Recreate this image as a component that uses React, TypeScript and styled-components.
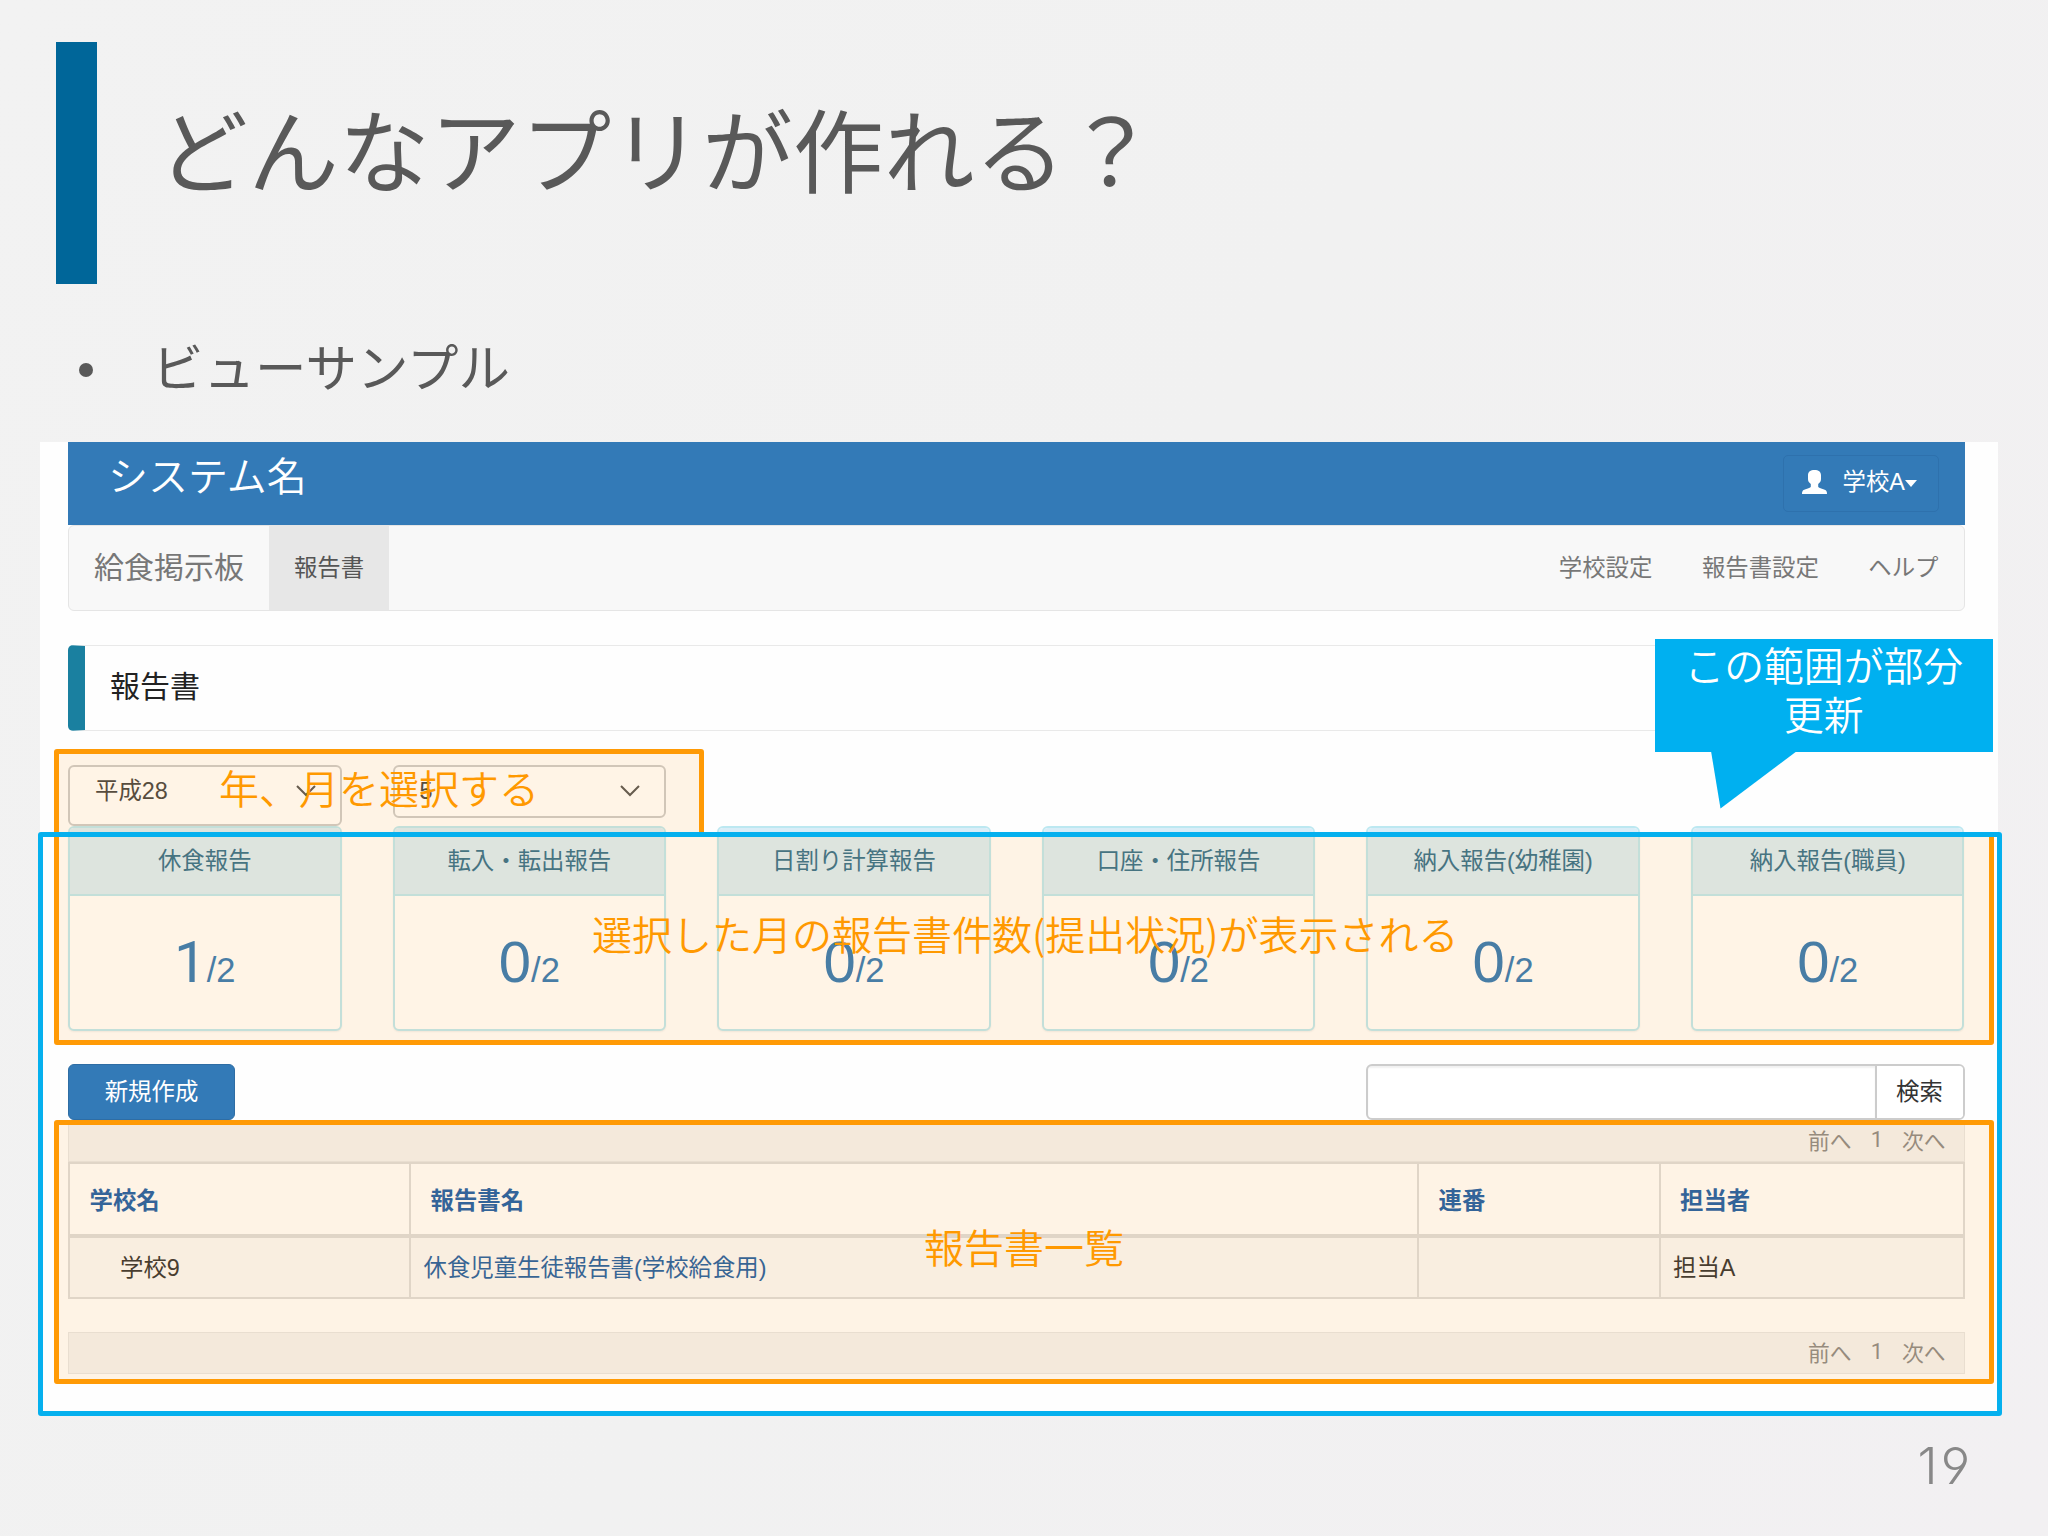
import React from "react";
import styled, { createGlobalStyle } from "styled-components";

const jp = '"Noto Sans CJK JP", "Noto Sans", sans-serif';
const ui = '"Liberation Sans", "Noto Sans CJK JP", sans-serif';

const Global = createGlobalStyle`
  * { box-sizing: border-box; }
  body { margin: 0; background: #f1f1f1; }
`;

const Slide = styled.main`
  position: relative;
  width: 2048px;
  height: 1536px;
  overflow: hidden;
  display: flex;
  flex-direction: column;
  background: linear-gradient(120deg, #f2f2f2 0%, #f1f1f1 50%, #f2f0f2 100%);
  font-family: ${jp};
  font-weight: 350;
  color: #595959;
`;

const SlideHeader = styled.header`
  display: flex;
  height: 242px;
  margin: 42px 0 0 56px;
`;

const Accent = styled.div`
  width: 40.5px;
  background: #006699;
`;

const Title = styled.h1`
  margin: 0 0 0 61px;
  font-size: 90.5px;
  line-height: 110px;
  padding-top: 50px;
  font-weight: 400;
  letter-spacing: 0.3px;
  white-space: nowrap;
`;

const BulletList = styled.ul`
  list-style: none;
  margin: 0;
  padding: 44px 0 0 79px;
  height: 157.5px;
`;

const BulletItem = styled.li`
  display: flex;
  align-items: center;
  gap: 59px;
  height: 74px;
  font-size: 51.5px;
  font-weight: 400;
  line-height: 74px;
`;

const Dot = styled.span`
  width: 14px;
  height: 14px;
  margin-top: 9px;
  border-radius: 50%;
  background: #595959;
`;

const AppPanel = styled.section`
  width: 1958px;
  height: 970px;
  margin-left: 40px;
  padding: 0 33.5px 0 28px;
  display: flex;
  flex-direction: column;
  background: #fefefe;
  font-family: ${ui};
  font-weight: 400;
  font-size: 23.4px;
  color: #333;
`;

const TopBar = styled.div`
  display: flex;
  justify-content: space-between;
  height: 83px;
  flex: none;
  padding: 13px 26px 0 40px;
  background: #337ab7;
  color: #fff;
`;

const SystemName = styled.div`
  font-family: ${jp};
  font-weight: 350;
  font-size: 40px;
  line-height: 40px;
  margin-top: -1px;
`;

const UserButton = styled.button`
  display: flex;
  align-items: center;
  width: 156px;
  height: 57px;
  padding: 0 0 2px 18px;
  border: 1.5px solid #2e71ad;
  border-radius: 5px;
  background: #337ab7;
  color: #fff;
  font: 400 23.4px/30px ${ui};
  white-space: nowrap;
`;

const UserIcon = styled.svg`
  width: 25px;
  height: 24px;
  margin-right: 16px;
  margin-top: -1px;
  fill: #fff;
`;

const Caret = styled.span`
  border: 6px solid transparent;
  border-top: 7px solid #fff;
  border-bottom: 0;
  margin-top: 2px;
`;

const NavBar = styled.nav`
  display: flex;
  align-items: stretch;
  height: 86px;
  flex: none;
  border: 1.5px solid #e5e5e5;
  border-radius: 6px;
  background: #f8f8f8;
  color: #777;
  line-height: 84px;
`;

const Brand = styled.a`
  width: 200px;
  padding-left: 25px;
  font-size: 30px;
`;

const Tab = styled.a`
  width: 120px;
  text-align: center;
  background: #e7e7e7;
  color: #555;
`;

const NavLinks = styled.div`
  display: flex;
  gap: 49.5px;
  margin-left: auto;
  padding-right: 25px;
`;

const Heading = styled.h2`
  margin: 34px 0;
  height: 86px;
  flex: none;
  padding-left: 25px;
  border: 1.5px solid #e9e9e9;
  border-left: 17px solid #1a80a0;
  border-radius: 5px;
  font-size: 30px;
  font-weight: 400;
  line-height: 81px;
  color: #222;
`;

const Filters = styled.div`
  display: flex;
  gap: 51px;
  height: 61px;
  flex: none;
  align-items: flex-start;
`;

const Select = styled.div<{ $h: number }>`
  display: flex;
  align-items: flex-start;
  justify-content: space-between;
  width: 273.5px;
  height: ${(p) => p.$h}px;
  padding: 0 24px 0 25px;
  border: 2px solid #ccc;
  border-radius: 6px;
  background: #fff;
  color: #444;
  line-height: 49px;
`;

const Chevron = styled.svg`
  width: 20px;
  height: 12px;
  margin-top: 18px;
  fill: none;
  stroke: #555;
  stroke-width: 2;
`;

const Cards = styled.div`
  display: grid;
  grid-template-columns: repeat(6, 273.5px);
  justify-content: space-between;
  height: 205px;
  flex: none;
`;

const Card = styled.article`
  display: flex;
  flex-direction: column;
  border: 2px solid #bce8f1;
  border-radius: 6px;
  background: #fff;
  overflow: hidden;
  box-shadow: 0 1px 2px rgba(0, 0, 0, 0.06);
`;

const CardHead = styled.div`
  height: 68px;
  line-height: 67px;
  text-align: center;
  background: #d9edf7;
  border-bottom: 2px solid #bce8f1;
  color: #31708f;
`;

const Count = styled.div`
  text-align: center;
  font-size: 58px;
  line-height: 66px;
  padding-top: 33px;
  color: #337ab7;
`;

const Digit = styled.span<{ $one: boolean }>`
  font-family: ${(p) => (p.$one ? "Roboto, sans-serif" : ui)};
`;

const Total = styled.span`
  font-size: 34.5px;
`;

const Toolbar = styled.div`
  display: flex;
  justify-content: space-between;
  height: 56px;
  flex: none;
  margin-top: 33px;
`;

const CreateButton = styled.button`
  width: 167px;
  padding: 0 6px;
  border: 1.5px solid #2e6da4;
  border-radius: 6px;
  background: #337ab7;
  color: #fff;
  font: 400 23.4px/30px ${ui};
`;

const SearchGroup = styled.div`
  display: flex;
  width: 599px;
  border: 2px solid #ccc;
  border-radius: 6px;
  background: #fff;
  overflow: hidden;
`;

const SearchField = styled.div`
  flex: 1;
  box-shadow: inset 0 2px 2px rgba(0, 0, 0, 0.06);
`;

const SearchButton = styled.button`
  width: 88px;
  border: 0;
  border-left: 2px solid #ccc;
  background: #fff;
  color: #333;
  font: 400 23.4px/30px ${ui};
`;

const Pager = styled.div<{ $top: number }>`
  display: flex;
  justify-content: flex-end;
  gap: 19px;
  height: 42px;
  flex: none;
  margin-top: ${(p) => p.$top}px;
  padding-right: 18px;
  border: 1px solid #e7e7e7;
  background: #f3f3f3;
  color: #8a8a8a;
  font-size: 21.8px;
  line-height: 42px;
`;

const PageNo = styled.span`
  font-family: Roboto, sans-serif;
  line-height: 37px;
`;

const Table = styled.div`
  display: grid;
  grid-template-columns: 341px 1008px 241.5px 1fr;
  flex: none;
  border-left: 2px solid #ddd;
  border-top: 2px solid #ddd;
`;

const Th = styled.div`
  height: 74px;
  padding-left: 19.5px;
  border-right: 2px solid #ddd;
  border-bottom: 4px solid #ddd;
  font-weight: 700;
  line-height: 74px;
  color: #1b5fa9;
`;

const Td = styled.div<{ $pad: number; $link?: boolean }>`
  height: 61px;
  padding-left: ${(p) => p.$pad}px;
  border-right: 2px solid #ddd;
  border-bottom: 2px solid #ddd;
  background: #f9f9f9;
  line-height: 60px;
  color: ${(p) => (p.$link ? "#1f60a4" : "#333")};
`;

const Region = styled.div<{ $x: number; $y: number; $w: number; $h: number; $blue?: boolean }>`
  position: absolute;
  left: ${(p) => p.$x}px;
  top: ${(p) => p.$y}px;
  width: ${(p) => p.$w}px;
  height: ${(p) => p.$h}px;
  border: 5.5px solid ${(p) => (p.$blue ? "#05b0ee" : "#ff9a05")};
  border-radius: 3px;
`;

const Tint = styled.div<{ $x: number; $y: number; $w: number; $h: number }>`
  position: absolute;
  left: ${(p) => p.$x}px;
  top: ${(p) => p.$y}px;
  width: ${(p) => p.$w}px;
  height: ${(p) => p.$h}px;
  background: rgba(255, 153, 20, 0.105);
`;

const Note = styled.div<{ $x: number; $y: number }>`
  position: absolute;
  left: ${(p) => p.$x}px;
  top: ${(p) => p.$y}px;
  font-size: 40px;
  line-height: 50px;
  color: #ff9900;
  white-space: nowrap;
`;

const Callout = styled.div`
  position: absolute;
  left: 1654.5px;
  top: 639px;
  width: 338.5px;
  height: 113px;
  background: #00b0f0;
  color: #fff;
  font-size: 39.8px;
  line-height: 49px;
  text-align: center;
`;

const Tail = styled.svg`
  position: absolute;
  left: 56px;
  top: 112px;
  width: 86px;
  height: 58px;
  fill: #00b0f0;
`;

const PageNumber = styled.footer`
  margin: 22px 75px 0 auto;
  font-family: Inter, sans-serif;
  font-feature-settings: "cv04" 1;
  font-weight: 300;
  font-size: 51px;
  line-height: 64px;
  letter-spacing: 3px;
  color: #888;
`;

const reports: [string, number][] = [
  ["休食報告", 1],
  ["転入・転出報告", 0],
  ["日割り計算報告", 0],
  ["口座・住所報告", 0],
  ["納入報告(幼稚園)", 0],
  ["納入報告(職員)", 0],
];

const Down = () => (
  <Chevron viewBox="0 0 20 12">
    <path d="M1 1 L10 10 L19 1" />
  </Chevron>
);

const Pages = ({ top }: { top: number }) => (
  <Pager $top={top}>
    <span>前へ</span>
    <PageNo>1</PageNo>
    <span>次へ</span>
  </Pager>
);

export default function App() {
  return (
    <Slide>
      <Global />
      <SlideHeader>
        <Accent />
        <Title>どんなアプリが作れる？</Title>
      </SlideHeader>
      <BulletList>
        <BulletItem>
          <Dot />
          ビューサンプル
        </BulletItem>
      </BulletList>

      <AppPanel>
        <TopBar>
          <SystemName>システム名</SystemName>
          <UserButton>
            <UserIcon viewBox="0 0 25 24">
              <path d="M12.5 0C8.500 0 6 1.800 6 5.200V9c0 2 .800 3.400 2.800 5v2.800C8.800 18 1.500 19.300.600 21C0 22 0 23 0 24h25c0-1 0-2-.600-3c-.900-1.700-8.200-3-8.200-4.200V14C18.200 12.400 19 11 19 9V5.200C19 1.800 16.500 0 12.500 0z" />
            </UserIcon>
            学校A
            <Caret />
          </UserButton>
        </TopBar>
        <NavBar>
          <Brand>給食掲示板</Brand>
          <Tab>報告書</Tab>
          <NavLinks>
            <span>学校設定</span>
            <span>報告書設定</span>
            <span>ヘルプ</span>
          </NavLinks>
        </NavBar>
        <Heading>報告書</Heading>
        <Filters>
          <Select $h={61}>
            平成28
            <Down />
          </Select>
          <Select $h={53}>
            5
            <Down />
          </Select>
        </Filters>
        <Cards>
          {reports.map(([name, n]) => (
            <Card key={name}>
              <CardHead>{name}</CardHead>
              <Count>
                <Digit $one={n === 1}>{n}</Digit>
                <Total>/2</Total>
              </Count>
            </Card>
          ))}
        </Cards>
        <Toolbar>
          <CreateButton>新規作成</CreateButton>
          <SearchGroup>
            <SearchField />
            <SearchButton>検索</SearchButton>
          </SearchGroup>
        </Toolbar>
        <Pages top={0} />
        <Table>
          <Th>学校名</Th>
          <Th>報告書名</Th>
          <Th>連番</Th>
          <Th>担当者</Th>
          <Td $pad={50}>学校9</Td>
          <Td $pad={12.5} $link>休食児童生徒報告書(学校給食用)</Td>
          <Td $pad={13} />
          <Td $pad={12.5}>担当A</Td>
        </Table>
        <Pages top={33} />
      </AppPanel>
      <PageNumber>19</PageNumber>

      <Tint $x={56} $y={752} $w={646} $h={83} />
      <Tint $x={56} $y={835} $w={1936} $h={208} />
      <Tint $x={56} $y={1122} $w={1936} $h={260} />
      <Region $x={53.5} $y={749} $w={650.5} $h={88} />
      <Region $x={53.5} $y={832} $w={1940.5} $h={213} />
      <Region $x={53.5} $y={1120} $w={1940.5} $h={263.5} />
      <Region $x={38} $y={832} $w={1963.5} $h={584} $blue />
      <Note $x={219} $y={762}>年、月を選択する</Note>
      <Note $x={592} $y={908}>選択した月の報告書件数(提出状況)が表示される</Note>
      <Note $x={924} $y={1221}>報告書一覧</Note>
      <Callout>
        この範囲が部分
        <br />
        更新
        <Tail viewBox="0 0 86 58">
          <path d="M0 0H86L9.500 57.500Z" />
        </Tail>
      </Callout>
    </Slide>
  );
}
